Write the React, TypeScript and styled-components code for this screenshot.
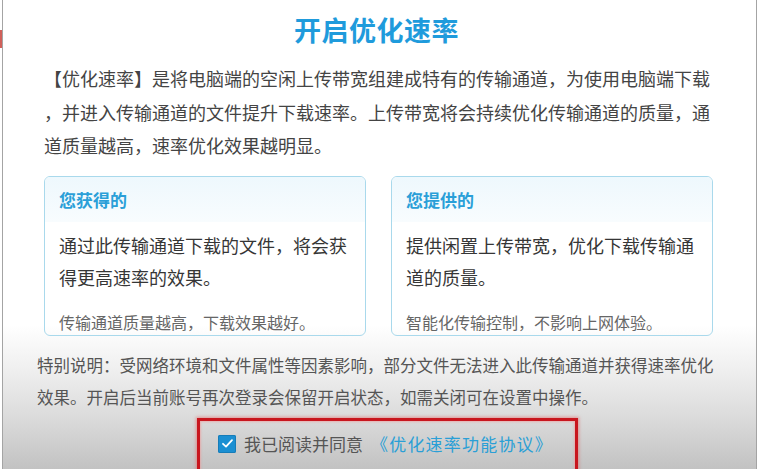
import styled, { createGlobalStyle } from "styled-components";

const intro = [
  "【优化速率】是将电脑端的空闲上传带宽组建成特有的传输通道，为使用电脑端下载",
  "，并进入传输通道的文件提升下载速率。上传带宽将会持续优化传输通道的质量，通",
  "道质量越高，速率优化效果越明显。",
];

const note = [
  "特别说明：受网络环境和文件属性等因素影响，部分文件无法进入此传输通道并获得速率优化",
  "效果。开启后当前账号再次登录会保留开启状态，如需关闭可在设置中操作。",
];

const cards = [
  {
    title: "您获得的",
    body: ["通过此传输通道下载的文件，将会获", "得更高速率的效果。"],
    tip: "传输通道质量越高，下载效果越好。",
  },
  {
    title: "您提供的",
    body: ["提供闲置上传带宽，优化下载传输通", "道的质量。"],
    tip: "智能化传输控制，不影响上网体验。",
  },
];

const GlobalStyle = createGlobalStyle`
  html, body {
    margin: 0;
    padding: 0;
    background: #ffffff;
  }
  body {
    font-family: "Noto Sans CJK SC", "Noto Sans", sans-serif;
  }
`;

const Screen = styled.div`
  position: relative;
  width: 758px;
  height: 469px;
  overflow: hidden;
  padding-left: 2px;
  padding-right: 1px;
  box-sizing: border-box;
  background: #ffffff;
`;

const EdgeMark = styled.div`
  position: absolute;
  left: 0;
  top: 30px;
  width: 2px;
  height: 18px;
  background: #d0605a;
`;

const Window = styled.div`
  height: 100%;
  box-sizing: border-box;
  border-left: 1px solid #a4a4a4;
  border-right: 1px solid #a4a4a4;
  background: linear-gradient(
    to bottom,
    #ffffff 0,
    #ffffff 325px,
    #efefef 370px,
    #dadada 420px,
    #c2c2c2 469px
  );
  display: flex;
  flex-direction: column;
  padding: 14px 41px 0;
`;

const Title = styled.h1`
  margin: 0;
  text-align: center;
  font-size: 27px;
  line-height: 32px;
  font-weight: 700;
  color: #1f9bdc;
  letter-spacing: 0.5px;
  margin-left: -6px;
`;

const Intro = styled.div`
  margin-top: 16px;
  color: #444444;
  font-size: 18px;
  line-height: 33.5px;
`;

const Line = styled.div`
  white-space: nowrap;
`;

const Cards = styled.div`
  display: flex;
  gap: 25px;
  margin-top: 13px;
`;

const Card = styled.div`
  width: 322px;
  height: 160px;
  box-sizing: border-box;
  border: 1px solid #a9d9ec;
  border-radius: 6px;
  display: flex;
  flex-direction: column;
  overflow: hidden;
`;

const CardHeader = styled.div`
  height: 45px;
  line-height: 45px;
  padding-left: 14px;
  font-size: 17px;
  font-weight: 600;
  color: #2a9fd8;
  background: linear-gradient(to bottom, #eef8fd, #f8fcfe);
`;

const CardBody = styled.div`
  padding: 7px 14px 0;
  font-size: 18px;
  line-height: 32px;
  color: #363636;
`;

const CardTip = styled.div`
  margin-top: 16px;
  padding-left: 14px;
  font-size: 16px;
  line-height: 26px;
  color: #666666;
  white-space: nowrap;
`;

const Note = styled.div`
  margin: 13px 0 0 -7px;
  font-size: 16.5px;
  line-height: 32px;
  color: #555555;
`;

const Highlight = styled.div`
  margin-top: 5px;
  margin-left: 153px;
  width: 381px;
  height: 70px;
  flex-shrink: 0;
  box-sizing: border-box;
  border: 3px solid #c8161e;
  box-shadow: 0 0 3px 1px rgba(230, 90, 90, 0.55),
    inset 0 0 2px 1px rgba(240, 150, 150, 0.6);
  padding: 14px 0 0 18px;
`;

const AgreeRow = styled.label`
  display: flex;
  align-items: center;
  gap: 8px;
  font-size: 17px;
  line-height: 18px;
  color: #555555;
`;

const Check = styled.span`
  width: 18px;
  height: 18px;
  border-radius: 2px;
  background: #1b8fd2;
  display: flex;
  align-items: center;
  justify-content: center;
  box-shadow: inset 0 0 0 1px #167cb8;
`;

const Link = styled.span`
  color: #2a9fd6;
  margin-left: 0;
  letter-spacing: 1.2px;
`;

export default function App() {
  return (
    <Screen>
      <GlobalStyle />
      <EdgeMark />
      <Window>
        <Title>开启优化速率</Title>
        <Intro>
          {intro.map((line) => (
            <Line key={line}>{line}</Line>
          ))}
        </Intro>
        <Cards>
          {cards.map((card) => (
            <Card key={card.title}>
              <CardHeader>{card.title}</CardHeader>
              <CardBody>
                {card.body.map((line) => (
                  <Line key={line}>{line}</Line>
                ))}
              </CardBody>
              <CardTip>{card.tip}</CardTip>
            </Card>
          ))}
        </Cards>
        <Note>
          {note.map((line) => (
            <Line key={line}>{line}</Line>
          ))}
        </Note>
        <Highlight>
          <AgreeRow>
            <Check>
              <svg width="13" height="13" viewBox="0 0 13 13">
                <path
                  d="M2 6.8 L5 9.6 L11 3.2"
                  fill="none"
                  stroke="#ffffff"
                  strokeWidth="1.8"
                  strokeLinecap="round"
                  strokeLinejoin="round"
                />
              </svg>
            </Check>
            <span>我已阅读并同意</span>
            <Link>《优化速率功能协议》</Link>
          </AgreeRow>
        </Highlight>
      </Window>
    </Screen>
  );
}
